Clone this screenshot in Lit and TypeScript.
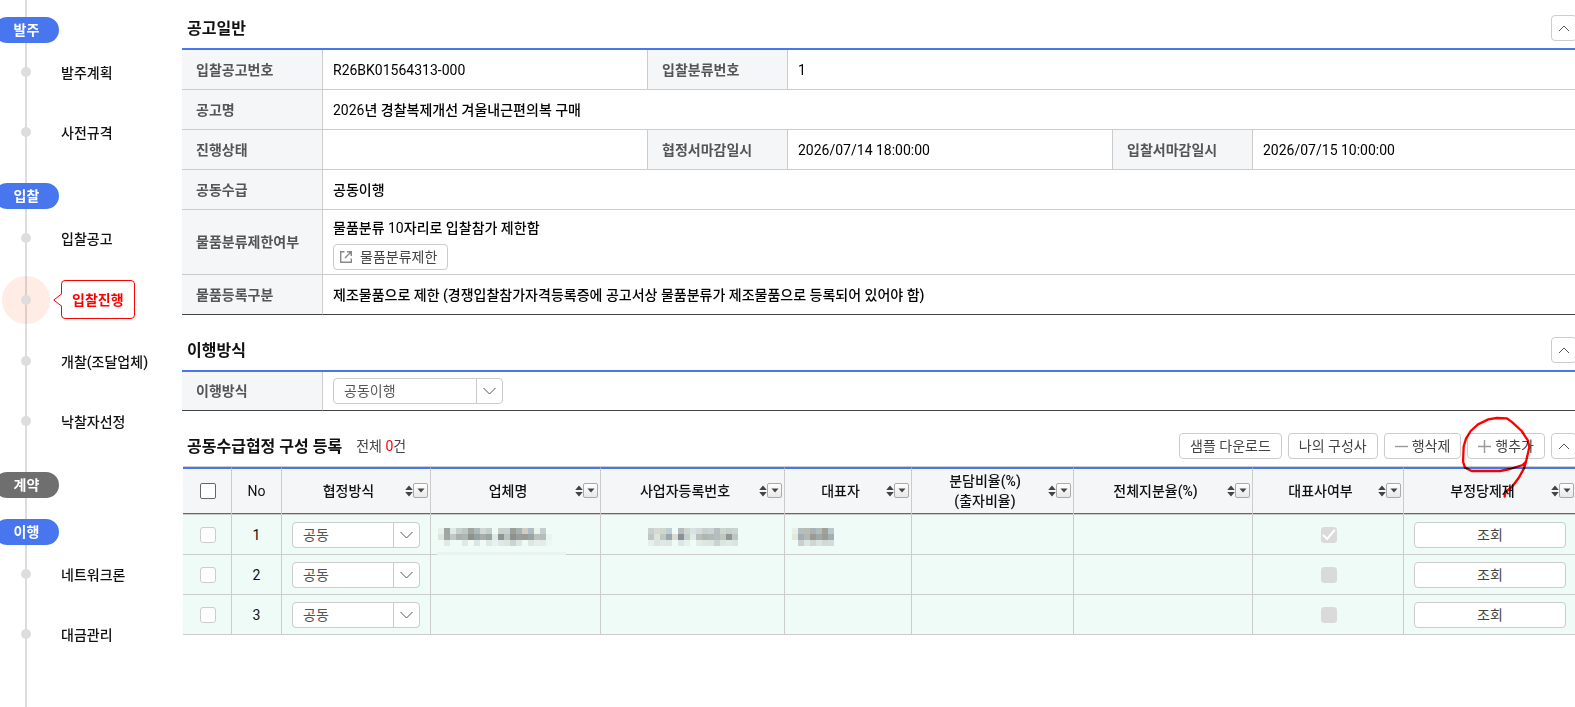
import { LitElement, html, css, svg, nothing } from "lit";
import { customElement, property, state } from "lit/decorators.js";
import { classMap } from "lit/directives/class-map.js";

const baseStyles = css`
  *,
  *::before,
  *::after {
    box-sizing: border-box;
  }
  ul,
  h2,
  p {
    margin: 0;
    padding: 0;
    list-style: none;
    font-size: inherit;
    font-weight: inherit;
  }
  svg {
    display: block;
    flex: none;
  }
  button,
  select,
  input {
    margin: 0;
    font: inherit;
    color: inherit;
  }
`;

const buttonStyles = css`
  .btn {
    display: flex;
    align-items: center;
    justify-content: center;
    height: 26px;
    padding: 0 10px;
    border: 1px solid #ccc;
    border-radius: 4px;
    background: #fff;
    color: #444;
    line-height: 20px;
    white-space: nowrap;
    cursor: pointer;
  }
`;

interface Step {
  label: string;
  active?: boolean;
}
interface Phase {
  title: string;
  muted?: boolean;
  steps: Step[];
}

const PHASES: Phase[] = [
  { title: "발주", steps: [{ label: "발주계획" }, { label: "사전규격" }] },
  {
    title: "입찰",
    steps: [
      { label: "입찰공고" },
      { label: "입찰진행", active: true },
      { label: "개찰(조달업체)" },
      { label: "낙찰자선정" },
    ],
  },
  { title: "계약", muted: true, steps: [] },
  { title: "이행", steps: [{ label: "네트워크론" }, { label: "대금관리" }] },
];

@customElement("process-nav")
export class ProcessNav extends LitElement {
  static styles = [
    baseStyles,
    css`
      :host {
        display: block;
      }
      .nav {
        display: flex;
        flex-direction: column;
        gap: 21px;
        min-height: 100%;
        padding-top: 17px;
        background: linear-gradient(#ddd, #ddd) 25px 0 / 2px 100% no-repeat;
      }
      .pill {
        display: flex;
        align-items: center;
        justify-content: center;
        width: 65px;
        height: 26px;
        margin-left: -6px;
        border-radius: 13px;
        background: #4876ef;
        color: #fff;
        font-weight: 700;
        line-height: 20px;
      }
      .pill.muted {
        background: #6f6f6f;
      }
      .steps {
        margin-top: -1px;
      }
      .step {
        display: flex;
        align-items: center;
        height: 60px;
        padding-left: 21px;
      }
      .step.active {
        height: 63px;
      }
      .dot {
        position: relative;
        flex: none;
        width: 10px;
        height: 10px;
      }
      .active .dot::before {
        content: "";
        position: absolute;
        inset: -19px;
        border-radius: 50%;
        background: rgba(255, 80, 20, 0.11);
      }
      .dot::after {
        content: "";
        position: absolute;
        inset: 0;
        border-radius: 50%;
        background: #ddd;
      }
      .link {
        margin-left: 30px;
        padding-top: 2px;
        color: #111;
        line-height: 20px;
        font-weight: 500;
        text-decoration: none;
      }
      .tip {
        z-index: 1;
        margin-left: 22px;
      }
      .tip path {
        fill: #fff;
        stroke: #f00;
      }
      .active .link {
        height: 39px;
        margin-left: -1px;
        padding: 9px 10px;
        border: 1px solid #f00;
        border-radius: 4px;
        background: #fff;
        color: #f00;
        font-weight: 700;
      }
    `,
  ];

  render() {
    return html`<nav class="nav" aria-label="진행단계">
      ${PHASES.map(
        (phase) => html`<section>
          <h2 class=${classMap({ pill: true, muted: !!phase.muted })}>${phase.title}</h2>
          ${phase.steps.length
            ? html`<ul class="steps">
                ${phase.steps.map(
                  (step) => html`<li class=${classMap({ step: true, active: !!step.active })}>
                    <span class="dot"></span>
                    ${step.active
                      ? html`<svg class="tip" width="9" height="14" viewBox="0 0 9 14">
                          <path d="M9 0.5L0.8 7L9 13.5" />
                        </svg>`
                      : nothing}
                    <a class="link" href="#" aria-current=${step.active ? "step" : nothing}>${step.label}</a>
                  </li>`,
                )}
              </ul>`
            : nothing}
        </section>`,
      )}
    </nav>`;
  }
}

@customElement("select-box")
export class SelectBox extends LitElement {
  @property() label = "";
  @property({ attribute: false }) options: string[] = [];

  static styles = [
    baseStyles,
    css`
      :host {
        display: block;
      }
      .box {
        display: grid;
        grid-template-columns: minmax(0, 1fr) 26px;
        height: 26px;
        border: 1px solid #ccc;
        border-radius: 4px;
        background: #fff;
        color: #555;
      }
      .field {
        grid-area: 1 / 1 / 2 / 3;
        appearance: none;
        width: 100%;
        padding: 0 10px;
        border: 0;
        border-radius: 4px;
        background: transparent;
        line-height: 20px;
      }
      .arrow {
        grid-area: 1 / 2;
        display: grid;
        place-items: center;
        border-left: 1px solid #ccc;
        pointer-events: none;
      }
      .arrow path {
        fill: none;
        stroke: #555;
      }
    `,
  ];

  render() {
    return html`<div class="box">
      <select class="field" aria-label=${this.label}>
        ${this.options.map((o) => html`<option>${o}</option>`)}
      </select>
      <span class="arrow">
        <svg width="13" height="8" viewBox="0 0 13 8"><path d="M0.5 1L6.5 7L12.5 1" /></svg>
      </span>
    </div>`;
  }
}

@customElement("section-block")
export class SectionBlock extends LitElement {
  @property() heading = "";
  @state() private open = true;

  static styles = [
    baseStyles,
    buttonStyles,
    css`
      :host {
        display: block;
      }
      .head {
        display: flex;
        align-items: center;
        gap: 6px;
        padding: var(--head-top, 22px) 0 7px 5px;
      }
      .title {
        padding-top: 2px;
        color: #111;
        font-size: 16px;
        font-weight: 700;
        line-height: 24px;
      }
      .tools {
        display: flex;
        flex: 1;
        align-items: center;
      }
      .toggle {
        width: 26px;
        padding: 0;
      }
      .toggle path {
        fill: none;
        stroke: #555;
      }
      .closed .toggle svg {
        rotate: 180deg;
      }
      .closed .content {
        display: none;
      }
    `,
  ];

  render() {
    return html`<section class=${classMap({ closed: !this.open })}>
      <header class="head">
        <h2 class="title">${this.heading}</h2>
        <div class="tools"><slot name="tools"></slot></div>
        <button
          class="btn toggle"
          aria-expanded=${this.open}
          aria-label="접기"
          @click=${() => (this.open = !this.open)}
        >
          <svg width="12" height="7" viewBox="0 0 12 7"><path d="M1 6L6 1L11 6" /></svg>
        </button>
      </header>
      <div class="content"><slot></slot></div>
    </section>`;
  }
}

/* Masked values: rows of 6px tiles, "-" leaves the cell background visible. */
const MASKS: Record<string, string[]> = {
  company: [
    "e8f0ea 9fa5a2 dce9e4 c5d0cb bcc7c3 a0a5a0 aebab9 cfd8d3 c2d0cc - c9d0c8 c5d0d2 9a9f98 a9b2b3 d0cdc4 b0bcc2 e9f4ea c3cdd0 -",
    "dde5df a1a8a4 bec8c4 a9b0ae adb5b4 8f918b 96a1a3 a8aca8 9aa4a4 dfe9e4 8d9494 b9c3c2 8e918b 969e9e 999b94 99a5a5 bbc1bb b5bcbb e8f4f1",
    "- dfe9e5 - - dfe9e5 - dbe5e1 - dfe8e4 e8f2ef dfe8e4 dbe5e1 c9d3cf dce6e2 - dde6e1 e3ede9 e3ece9 ebf7f3",
  ],
  bizNo: [
    "c9d0cd d3dad6 cfd6cb bfced2 - b3bcbf d0d6cd d5e3e6 d3dad7 c7d0cc c9d3cf b5bfc1 cdd5cf c5d0cd c9d4d2",
    "bfc7c4 dfe3d9 c1c8bd 9aa8ad d8ddd0 8a8f98 c4cec9 e0eae6 b8c0be b0b5b0 b3b9b5 b5bebf bfc7c1 929691 bdc6c3",
    "e5f0ed dae5df dee8e4 dce6e3 - dbe6e2 e6f1ee - e2ebe8 dce8e4 dbe5e1 cad3cf dbe5e1 dfe8e4 d9e5e1",
  ],
  owner: [
    "e6f0ea b3bfbf b9bcb0 a7b1b7 b1bcbb a0a29a bac7c8",
    "e2e9da a4adb2 b2b9b5 9a9a93 a0a9a9 9b9d95 a5aeb6",
    "- c8d0cd dbe5e2 cfd7d2 dbe3df d2dad5 d2dcd9",
  ],
};

const mask = (key: string) => {
  const rows = MASKS[key].map((r) => r.split(" "));
  return html`<svg class="mask" width=${rows[0].length * 6} height="18" shape-rendering="crispEdges">
    ${rows.map((row, y) =>
      row.map((c, x) =>
        c === "-"
          ? nothing
          : svg`<rect x=${x * 6} y=${y * 6} width="6" height="6" fill=${"#" + c}></rect>`,
      ),
    )}
  </svg>`;
};

interface Column {
  width: number;
  lines: string[];
}
const COLUMNS: Column[] = [
  { width: 149, lines: ["협정방식"] },
  { width: 170, lines: ["업체명"] },
  { width: 184, lines: ["사업자등록번호"] },
  { width: 127, lines: ["대표자"] },
  { width: 162, lines: ["분담비율(%)", "(출자비율)"] },
  { width: 179, lines: ["전체지분율(%)"] },
  { width: 151, lines: ["대표사여부"] },
  { width: 173, lines: ["부정당제재"] },
];

@customElement("member-grid")
export class MemberGrid extends LitElement {
  static styles = [
    baseStyles,
    buttonStyles,
    css`
      :host {
        display: block;
        margin-left: 1px;
      }
      .grid {
        width: 100%;
        border-collapse: separate;
        border-spacing: 0;
        border-top: 1px solid #ccc;
        table-layout: fixed;
      }
      .grid th {
        height: 48px;
        padding: 0 0 2px;
        border-top: 2px solid #4876ef;
        border-right: 1px solid #ccc;
        border-bottom: 1px solid #ccc;
        background: #f4f6f8;
        box-shadow: inset 0 -1px #6b6567;
        color: #111;
        font-weight: 500;
        line-height: 20px;
        text-align: center;
      }
      .grid td {
        position: relative;
        height: 40px;
        padding: 0 10px;
        border-right: 1px solid #ccc;
        border-bottom: 1px solid #ccc;
        background: #eefbf7;
        color: #111;
        line-height: 20px;
      }
      .grid .num {
        padding-top: 1px;
        font-weight: 400;
        text-align: center;
      }
      .grid .masked {
        padding: 4px 7px 0;
      }
      .center .mask {
        margin: 0 auto;
      }
      .smear {
        position: absolute;
        left: 6px;
        right: 34px;
        bottom: -1px;
        height: 3px;
        background: #e9f4f0;
      }
      .cell {
        display: flex;
        align-items: center;
        padding: 0 2px 0 10px;
      }
      .name {
        flex: 1;
      }
      .name span {
        display: block;
      }
      .sort {
        display: block;
        width: 8px;
        height: 12px;
        padding: 0;
        border: 0;
        background: none;
      }
      .filter {
        display: grid;
        place-items: center;
        width: 15px;
        height: 15px;
        padding: 0;
        border: 1px solid #aaa;
        border-radius: 2px;
        background: linear-gradient(#fff, #e8e8e8);
      }
      .sort path,
      .filter path {
        fill: #444;
      }
      .check {
        display: block;
        appearance: none;
        width: 16px;
        height: 16px;
        margin: 0 auto;
        border: 1px solid #ccc;
        border-radius: 3px;
        background: #fff;
      }
      th .check {
        border-color: #666;
        border-radius: 2px;
      }
      .grid .pick {
        padding-left: 1px;
        padding-right: 0;
      }
      .check:disabled {
        border-color: #dadada;
        background: #dadada;
      }
      .state {
        display: grid;
        place-items: center;
      }
      .state > * {
        grid-area: 1 / 1;
      }
      .tick {
        fill: none;
        stroke: #fff;
        stroke-width: 2;
      }
      .query {
        width: 100%;
      }
    `,
  ];

  render() {
    return html`<table class="grid">
      <colgroup>
        <col style="width:49px" />
        <col style="width:50px" />
        ${COLUMNS.map((c) => html`<col style=${`width:${c.width}px`} />`)}
      </colgroup>
      <thead>
        <tr>
          <th class="pick"><input class="check" type="checkbox" aria-label="전체 선택" /></th>
          <th class="num">No</th>
          ${COLUMNS.map(
            (c) => html`<th>
              <div class="cell">
                <div class="name">${c.lines.map((l) => html`<span>${l}</span>`)}</div>
                <button class="sort" aria-label="정렬">
                  <svg width="8" height="12" viewBox="0 0 8 12">
                    <path d="M4 0.5L7.8 5H0.2ZM4 11.5L0.2 7H7.8Z" />
                  </svg>
                </button>
                <button class="filter" aria-label="필터">
                  <svg width="8" height="5" viewBox="0 0 8 5"><path d="M0.5 0.5H7.5L4 4.5Z" /></svg>
                </button>
              </div>
            </th>`,
          )}
        </tr>
      </thead>
      <tbody>
        ${[1, 2, 3].map((n) => {
          const first = n === 1;
          return html`<tr>
            <td class="pick"><input class="check" type="checkbox" aria-label=${`${n}행 선택`} /></td>
            <td class="num">${n}</td>
            <td><select-box label="협정방식" .options=${["공동"]}></select-box></td>
            <td class="masked">${first ? html`${mask("company")}<span class="smear"></span>` : nothing}</td>
            <td class="masked center">${first ? mask("bizNo") : nothing}</td>
            <td class="masked">${first ? mask("owner") : nothing}</td>
            <td></td>
            <td></td>
            <td class="pick">
              <div class="state">
                <input class="check" type="checkbox" disabled ?checked=${first} aria-label="대표사여부" />
                ${first
                  ? html`<svg class="tick" width="16" height="16" viewBox="0 0 16 16">
                      <path d="M2 8L6.2 12L13.6 3" />
                    </svg>`
                  : nothing}
              </div>
            </td>
            <td><button class="btn query">조회</button></td>
          </tr>`;
        })}
      </tbody>
    </table>`;
  }
}

@customElement("app-root")
export class AppRoot extends LitElement {
  static styles = [
    baseStyles,
    buttonStyles,
    css`
      :host {
        display: block;
        min-height: 100vh;
        overflow: hidden;
        background: #fff;
        color: #000;
        font-family: Roboto, "Noto Sans CJK KR", sans-serif;
        font-size: 14px;
        line-height: 20px;
      }
      .layout {
        display: grid;
        grid-template-columns: 182px minmax(0, 1fr);
        min-height: 100vh;
      }
      /* The last column runs slightly under the window's right edge. */
      .main {
        margin-right: -2px;
      }
      .first {
        --head-top: 15px;
      }
      .info {
        width: 100%;
        border-collapse: separate;
        border-spacing: 0;
        border-top: 2px solid #4876ef;
        table-layout: fixed;
      }
      .label-col {
        width: 140px;
      }
      .info th,
      .info td {
        height: 40px;
        padding: 0 10px;
        border-bottom: 1px solid #ccc;
        border-left: 1px solid #ccc;
        text-align: left;
        font-weight: 500;
      }
      .info th {
        padding: 0 14px;
        background: #f4f6f8;
        color: #555;
        font-weight: 700;
      }
      .info th:first-child {
        border-left: 0;
      }
      .info tr:last-child > * {
        border-bottom-color: #444;
      }
      .info .plain {
        font-weight: 400;
      }
      .info .stack {
        padding-top: 8px;
        padding-bottom: 4px;
      }
      .info .short > * {
        height: 39px;
      }
      .open {
        gap: 8px;
        margin-top: 6px;
        padding: 0 10px 0 6px;
        font-weight: 400;
      }
      .open path {
        fill: none;
        stroke: #888;
        stroke-width: 1.4;
      }
      .method {
        width: 170px;
        font-weight: 400;
      }
      .tools {
        display: flex;
        flex: 1;
        align-items: center;
        gap: 6px;
      }
      .count {
        flex: 1;
        margin-left: 8px;
        color: #444;
      }
      .total {
        color: #f00;
      }
      .icon {
        gap: 4px;
      }
      .icon path {
        fill: none;
        stroke: #999;
        stroke-width: 1.4;
      }
      .marked {
        position: relative;
      }
      .pen {
        position: absolute;
        left: -5px;
        top: -17px;
        mix-blend-mode: multiply;
        pointer-events: none;
      }
      .pen path {
        fill: none;
        stroke: #f00;
        stroke-width: 7;
        stroke-linejoin: round;
        stroke-linecap: round;
      }
    `,
  ];

  render() {
    return html`<div class="layout">
      <process-nav></process-nav>
      <main class="main">
        <section-block class="first" heading="공고일반">
          <table class="info">
            <colgroup>
              <col class="label-col" /><col />
              <col class="label-col" /><col />
              <col class="label-col" /><col />
            </colgroup>
            <tbody>
              <tr>
                <th scope="row">입찰공고번호</th>
                <td class="plain">R26BK01564313-000</td>
                <th scope="row">입찰분류번호</th>
                <td class="plain" colspan="3">1</td>
              </tr>
              <tr>
                <th scope="row">공고명</th>
                <td colspan="5"><span class="plain">2026</span>년 경찰복제개선 겨울내근편의복 구매</td>
              </tr>
              <tr>
                <th scope="row">진행상태</th>
                <td></td>
                <th scope="row">협정서마감일시</th>
                <td class="plain">2026/07/14 18:00:00</td>
                <th scope="row">입찰서마감일시</th>
                <td class="plain">2026/07/15 10:00:00</td>
              </tr>
              <tr>
                <th scope="row">공동수급</th>
                <td colspan="5">공동이행</td>
              </tr>
              <tr>
                <th scope="row">물품분류제한여부</th>
                <td class="stack" colspan="5">
                  <p>물품분류 <span class="plain">10</span>자리로 입찰참가 제한함</p>
                  <button class="btn open">
                    <svg width="12" height="12" viewBox="0 0 12 12">
                      <path d="M4.5 0.7H0.7V11.3H11.3V7.5M7 0.7H11.3V5M11 1L5 7" />
                    </svg>
                    물품분류제한
                  </button>
                </td>
              </tr>
              <tr>
                <th scope="row">물품등록구분</th>
                <td colspan="5">
                  제조물품으로 제한 (경쟁입찰참가자격등록증에 공고서상 물품분류가 제조물품으로 등록되어 있어야 함)
                </td>
              </tr>
            </tbody>
          </table>
        </section-block>

        <section-block heading="이행방식">
          <table class="info">
            <colgroup>
              <col class="label-col" /><col />
            </colgroup>
            <tbody>
              <tr class="short">
                <th scope="row">이행방식</th>
                <td>
                  <select-box class="method" label="이행방식" .options=${["공동이행"]}></select-box>
                </td>
              </tr>
            </tbody>
          </table>
        </section-block>

        <section-block heading="공동수급협정 구성 등록">
          <div class="tools" slot="tools">
            <p class="count">전체 <span class="total">0</span>건</p>
            <button class="btn">샘플 다운로드</button>
            <button class="btn">나의 구성사</button>
            <button class="btn icon">
              <svg width="13" height="13" viewBox="0 0 13 13"><path d="M0 6.5H13" /></svg>행삭제
            </button>
            <div class="marked">
              <button class="btn icon">
                <svg width="13" height="13" viewBox="0 0 13 13"><path d="M0 6.5H13M6.5 0V13" /></svg>행추가
              </button>
              <svg class="pen" width="69" height="82" viewBox="1206 18 207 246">
                <path
                  d="M1398 155L1388 165L1350 177L1320 183H1235L1215 173L1209 155L1211 110L1218 86L1232 63L1254 43L1285 28L1310 24L1341 25L1358 38L1385 63L1404 92L1408 112L1398 155L1392 175L1376 204L1356 230L1336 247L1334 260"
                />
              </svg>
            </div>
          </div>
          <member-grid></member-grid>
        </section-block>
      </main>
    </div>`;
  }
}
